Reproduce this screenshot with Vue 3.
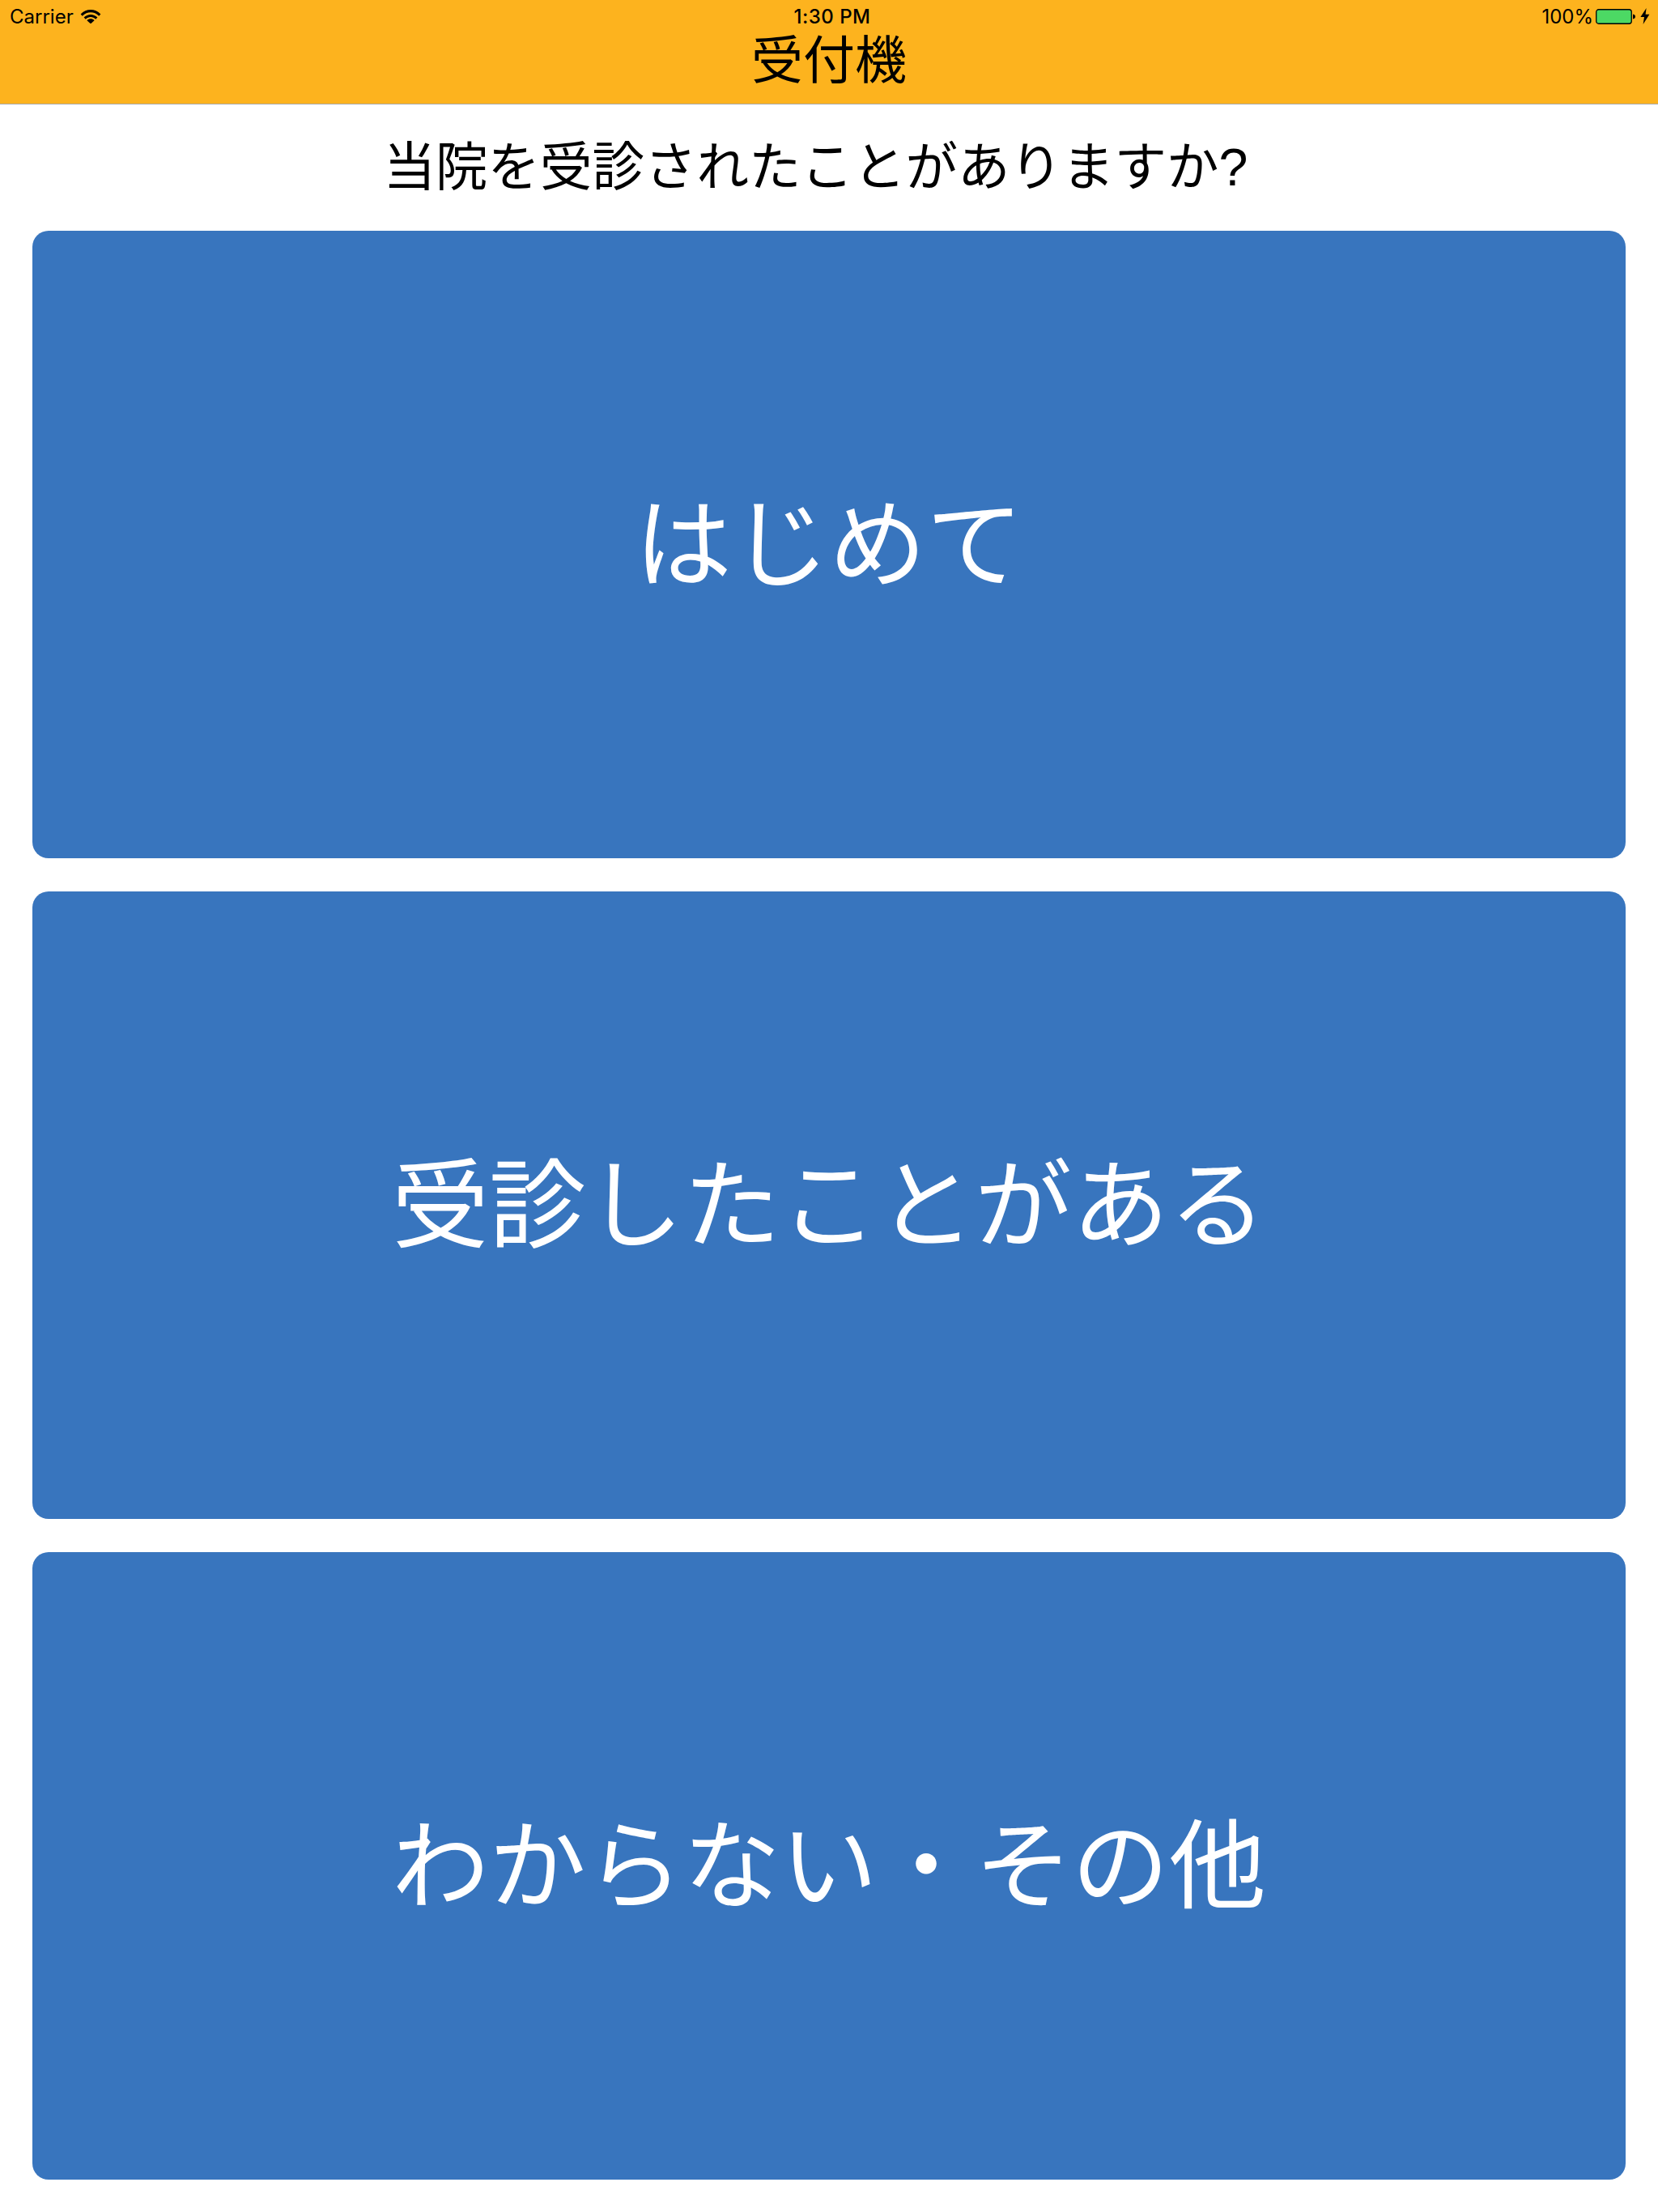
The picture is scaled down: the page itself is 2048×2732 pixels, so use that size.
<script setup>
const choices = ['はじめて', '受診したことがある', 'わからない・その他']
</script>

<template>
  <div class="page">
    <header class="nav">
      <div class="status">
        <div class="status-left">
          <span>Carrier</span>
          <svg class="wifi" viewBox="0 0 26 18" width="26" height="18">
            <path d="M0.6 6.4 C7.6 -0.8 18.4 -0.8 25.4 6.4 L23.2 8.7 C17.3 2.8 8.7 2.8 2.8 8.7 Z" fill="#000" />
            <path d="M4.6 10.5 C9.4 5.7 16.6 5.7 21.4 10.5 L19.2 12.8 C15.6 9.2 10.4 9.2 6.8 12.8 Z" fill="#000" />
            <path d="M8.4 14.2 C11 11.7 15 11.7 17.6 14.2 L13 18.4 Z" fill="#000" />
          </svg>
        </div>
        <div class="clock">1:30 PM</div>
        <div class="status-right">
          <span>100%</span>
          <svg class="battery" viewBox="0 0 50 22" width="50" height="22">
            <rect x="0.75" y="1.75" width="43.5" height="17.5" rx="3" fill="#4cd964" stroke="#000" stroke-width="1.3" />
            <path d="M46 7.5 C48 7.8 49 9 49 10.5 C49 12 48 13.2 46 13.5 Z" fill="#000" />
          </svg>
          <svg class="bolt" viewBox="0 0 12 20" width="12" height="20">
            <path d="M7.6 0 L0.4 11 H5 L3.6 20 L11.4 7.8 H6.6 Z" fill="#000" />
          </svg>
        </div>
      </div>
      <h1 class="title">受付機</h1>
    </header>
    <main class="body">
      <p class="question">当院を受診されたことがありますか?</p>
      <div class="choices">
        <button v-for="c in choices" :key="c" class="choice" type="button">{{ c }}</button>
      </div>
    </main>
  </div>
</template>

<style>
html, body { margin: 0; background: #fff; }
</style>

<style scoped>
.page {
  width: 2048px;
  height: 2732px;
  display: flex;
  flex-direction: column;
  background: #fff;
  font-family: "Noto Sans CJK JP", "Liberation Sans", sans-serif;
  color: #000;
}
.nav {
  height: 128px;
  flex: none;
  box-sizing: content-box;
  background: #fdb31e;
  border-bottom: 1px solid #a9a9a9;
  display: flex;
  flex-direction: column;
}
.status {
  height: 34px;
  padding: 4px 10px 0 12px;
  display: grid;
  grid-template-columns: 1fr auto 1fr;
  align-items: center;
  font-family: Inter, "Liberation Sans", sans-serif;
  font-size: 24px;
  line-height: 34px;
}
.status-left { display: flex; align-items: center; gap: 8px; }
.wifi { margin-top: -3px; }
.clock { font-weight: 500; margin-left: 6px; letter-spacing: 0.5px; }
.status-right { display: flex; align-items: center; justify-content: flex-end; gap: 6px; }
.battery { margin-left: -3px; margin-right: -1px; }
.bolt { margin-top: -3px; }
.title {
  margin: 0;
  font-size: 64px;
  line-height: 62px;
  font-weight: 400;
  text-align: center;
}
.body {
  flex: 1;
  display: flex;
  flex-direction: column;
  padding: 0 40px;
}
.question {
  margin: 0 0 0 -33px;
  height: 156px;
  box-sizing: border-box;
  padding: 38px 0 0 0;
  font-family: "Liberation Sans", "Noto Sans CJK JP", sans-serif;
  font-size: 64.5px;
  line-height: 80px;
  text-align: center;
  font-weight: 400;
}
.choices {
  display: flex;
  flex-direction: column;
  gap: 41px;
}
.choice {
  height: 775px;
  border: 0;
  padding: 0 0 18px 0;
  border-radius: 20px;
  background: #3875be;
  color: #fff;
  font-family: "Noto Sans CJK JP", sans-serif;
  font-size: 120px;
  font-weight: 400;
}
</style>
